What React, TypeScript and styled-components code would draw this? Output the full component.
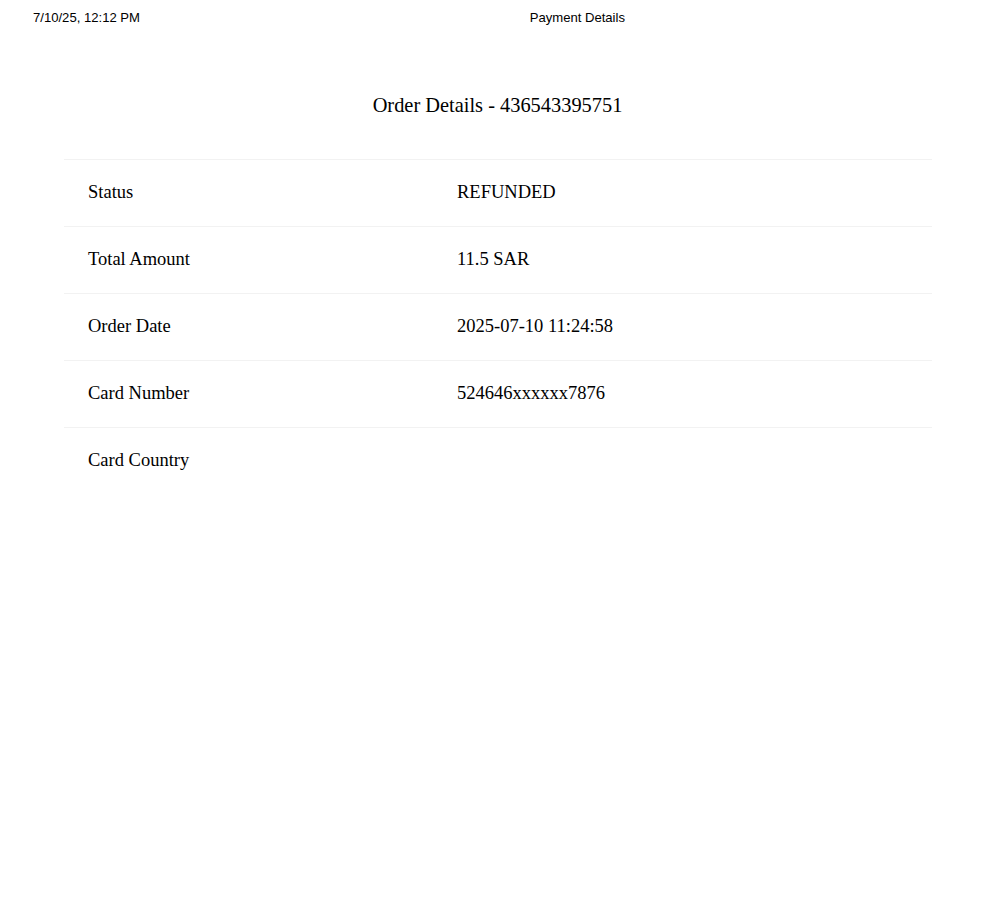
import React from "react";
import styled, { createGlobalStyle } from "styled-components";

const Global = createGlobalStyle`
  html, body { margin: 0; padding: 0; background: #ffffff; }
  body { font-family: "Liberation Serif", "Times New Roman", serif; color: #000; }
`;

const Page = styled.div`
  width: 1000px;
  min-height: 914px;
  display: flex;
  flex-direction: column;
`;

const PrintHeader = styled.header`
  display: flex;
  align-items: center;
  height: 34px;
  padding: 0 0 0 33px;
  font-family: "Liberation Sans", Arial, sans-serif;
  font-size: 13.1px;
  color: #000;
`;

const HeaderTitle = styled.span`
  margin-left: auto;
  margin-right: 375px;
`;

const Title = styled.h1`
  margin: 59px 0 0;
  padding-right: 5px;
  height: 24px;
  line-height: 24px;
  font-size: 20.4px;
  font-weight: 400;
  text-align: center;
`;

const Table = styled.div`
  margin: 42px 68px 0 64px;
  display: flex;
  flex-direction: column;
`;

const Row = styled.div`
  display: grid;
  grid-template-columns: 369px 1fr;
  box-sizing: border-box;
  height: 67px;
  padding-bottom: 2px;
  align-items: center;
  border-top: 1px solid #f2f2f2;
  font-size: 18.5px;
`;

const Cell = styled.div`
  padding: 0 24px;
`;

const rows: [string, string][] = [
  ["Status", "REFUNDED"],
  ["Total Amount", "11.5 SAR"],
  ["Order Date", "2025-07-10 11:24:58"],
  ["Card Number", "524646xxxxxx7876"],
  ["Card Country", ""],
];

export default function App() {
  return (
    <Page>
      <Global />
      <PrintHeader>
        <span>7/10/25, 12:12 PM</span>
        <HeaderTitle>Payment Details</HeaderTitle>
      </PrintHeader>
      <Title>Order Details - 436543395751</Title>
      <Table>
        {rows.map(([k, v]) => (
          <Row key={k}>
            <Cell>{k}</Cell>
            <Cell>{v}</Cell>
          </Row>
        ))}
      </Table>
    </Page>
  );
}
